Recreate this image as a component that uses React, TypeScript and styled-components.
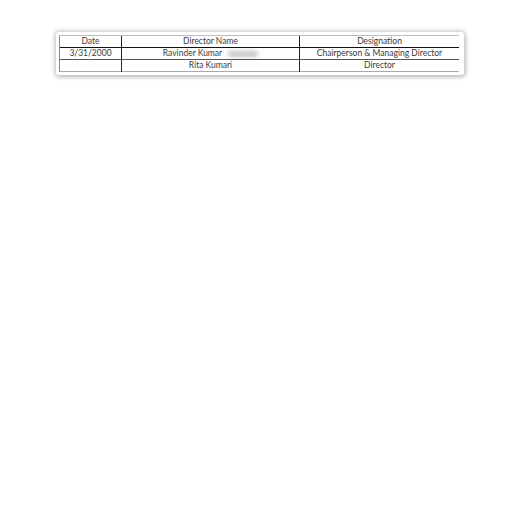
import React from "react"
import styled, { createGlobalStyle } from "styled-components"

const GlobalStyle = createGlobalStyle`
	html, body {
		margin: 0;
		padding: 0;
		background: #ffffff;
	}
`

const Page = styled.div`
	width: 512px;
	height: 512px;
	padding: 32px 0 0 56px;
	box-sizing: border-box;
`

const Paper = styled.div`
	display: inline-block;
	padding: 3px 5px 3px 3px;
	background: #ffffff;
	box-shadow: 0 0 4px 2px rgba(0, 0, 0, 0.16), 1px 2px 5px rgba(0, 0, 0, 0.14);
	border-radius: 3px;
`

const Table = styled.table`
	border-collapse: collapse;
	width: 400px;
	font-family: "Lato", "Liberation Sans", sans-serif;
	font-size: 8.5px;
	color: #3a3a3a;
	table-layout: fixed;
`

interface RowProps {
	$line: string
}

const Row = styled.tr<RowProps>`
	& > td {
		border-top: 1px solid ${p => p.$line};
	}
`

interface CellProps {
	$w?: number
}

const Cell = styled.td<CellProps>`
	width: ${p => (p.$w ? `${p.$w}px` : "auto")};
	height: 11px;
	padding: 0;
	line-height: 11px;
	text-align: center;
	border-left: 1px solid #222;
	white-space: nowrap;
	overflow: hidden;
	&:first-child {
		border-left: 1px solid #888;
	}
`

const EndCell = styled.td`
	height: 0;
	padding: 0;
	border-top: 1px solid #aaa;
`

const Blur = styled.span`
	display: inline-block;
	width: 30px;
	height: 6px;
	margin-left: 6px;
	vertical-align: middle;
	background: #c4c4c4;
	border-radius: 3px;
	filter: blur(2px);
`

const rows = [
	{ date: "Date", name: "Director Name", role: "Designation", blur: false, line: "#bbb" },
	{ date: "3/31/2000", name: "Ravinder Kumar", role: "Chairperson & Managing Director", blur: true, line: "#111" },
	{ date: "", name: "Rita Kumari", role: "Director", blur: false, line: "#555" },
]

const App: React.FC = () => (
	<>
		<GlobalStyle />
		<Page>
			<Paper>
				<Table>
					<tbody>
						{rows.map((r, i) => (
							<Row key={i} $line={r.line}>
								<Cell $w={61}>{r.date}</Cell>
								<Cell $w={177}>
									{r.name}
									{r.blur && <Blur />}
								</Cell>
								<Cell>{r.role}</Cell>
							</Row>
						))}
						<tr>
							<EndCell />
							<EndCell />
							<EndCell />
						</tr>
					</tbody>
				</Table>
			</Paper>
		</Page>
	</>
)

export default App
